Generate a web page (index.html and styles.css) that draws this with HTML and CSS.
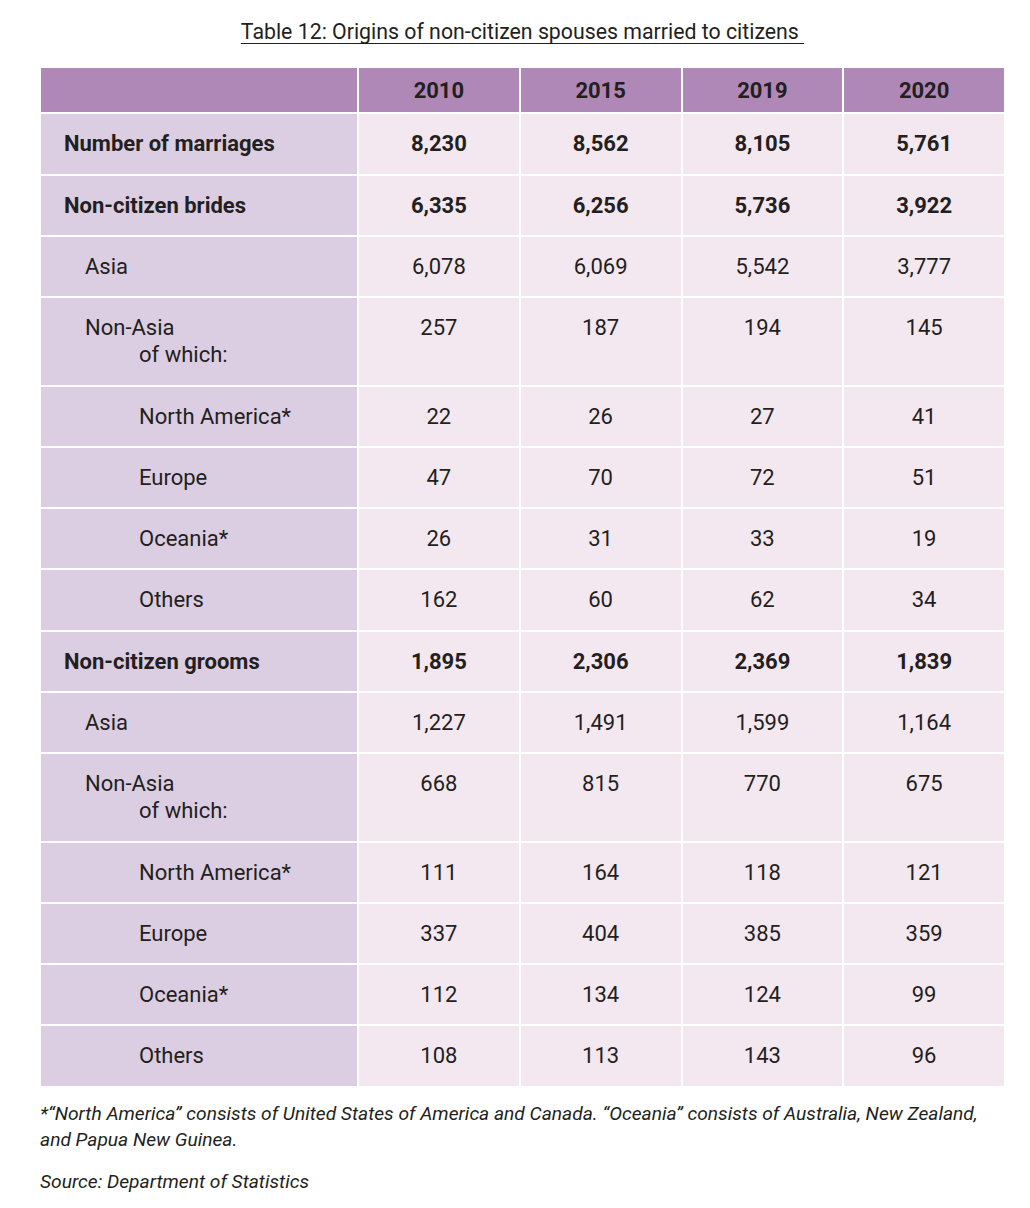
FILE: index.html
```html
<!DOCTYPE html>
<html lang="en">
<head>
<meta charset="utf-8">
<title>Table 12</title>
<link rel="stylesheet" href="styles.css">
</head>
<body>
<div class="page">
  <h1 class="title"><span>Table 12: Origins of non-citizen spouses married to citizens&nbsp;</span></h1>
  <table class="data">
    <thead>
      <tr><th class="lab"></th><th>2010</th><th>2015</th><th>2019</th><th>2020</th></tr>
    </thead>
    <tbody>
      <tr class="bold"><td class="lab">Number of marriages</td><td>8,230</td><td>8,562</td><td>8,105</td><td>5,761</td></tr>
      <tr class="bold"><td class="lab">Non-citizen brides</td><td>6,335</td><td>6,256</td><td>5,736</td><td>3,922</td></tr>
      <tr><td class="lab l1">Asia</td><td>6,078</td><td>6,069</td><td>5,542</td><td>3,777</td></tr>
      <tr><td class="lab l1">Non-Asia<br><span class="sub">of which:</span></td><td>257</td><td>187</td><td>194</td><td>145</td></tr>
      <tr><td class="lab l2">North America*</td><td>22</td><td>26</td><td>27</td><td>41</td></tr>
      <tr><td class="lab l2">Europe</td><td>47</td><td>70</td><td>72</td><td>51</td></tr>
      <tr><td class="lab l2">Oceania*</td><td>26</td><td>31</td><td>33</td><td>19</td></tr>
      <tr><td class="lab l2">Others</td><td>162</td><td>60</td><td>62</td><td>34</td></tr>
      <tr class="bold"><td class="lab">Non-citizen grooms</td><td>1,895</td><td>2,306</td><td>2,369</td><td>1,839</td></tr>
      <tr><td class="lab l1">Asia</td><td>1,227</td><td>1,491</td><td>1,599</td><td>1,164</td></tr>
      <tr><td class="lab l1">Non-Asia<br><span class="sub">of which:</span></td><td>668</td><td>815</td><td>770</td><td>675</td></tr>
      <tr><td class="lab l2">North America*</td><td>111</td><td>164</td><td>118</td><td>121</td></tr>
      <tr><td class="lab l2">Europe</td><td>337</td><td>404</td><td>385</td><td>359</td></tr>
      <tr><td class="lab l2">Oceania*</td><td>112</td><td>134</td><td>124</td><td>99</td></tr>
      <tr><td class="lab l2">Others</td><td>108</td><td>113</td><td>143</td><td>96</td></tr>
    </tbody>
  </table>
  <p class="note">*“North America” consists of United States of America and Canada. “Oceania” consists of Australia, New Zealand, and Papua New Guinea.</p>
  <p class="note source">Source: Department of Statistics</p>
</div>
</body>
</html>
```

FILE: styles.css
```css
html, body {
  margin: 0;
  padding: 0;
  background: #ffffff;
}

body {
  font-family: Roboto, "Liberation Sans", sans-serif;
  color: #231f20;
}

.page {
  width: 967px;
  padding: 17px 0 0 39px;
}

.title {
  margin: 0 0 19px;
  text-align: center;
  font-size: 21.3px;
  font-weight: 400;
  line-height: 30px;
}

.title span {
  text-decoration: underline;
  text-decoration-thickness: 1px;
  text-underline-offset: 4px;
}

.data {
  width: 967px;
  border-collapse: collapse;
  table-layout: fixed;
  font-size: 22px;
  line-height: 27.25px;
}

.data th,
.data td {
  border: 2px solid #ffffff;
  text-align: center;
  vertical-align: top;
  padding: 16px 8px;
  background: #f3e7f0;
}

.data th {
  background: #af88b7;
  font-weight: 700;
  padding: 8.5px 8px;
}

.data th.lab {
  width: 300px;
}

.data td.lab {
  text-align: left;
  background: #dbcde2;
  padding-left: 23px;
}

.data td.l1 {
  padding-left: 44px;
}

.data td.l2 {
  padding-left: 98px;
}

.sub {
  display: inline-block;
  padding-left: 54px;
}

.bold td {
  font-weight: 700;
}

.note {
  margin: 13px 0 0 1px;
  font-size: 19.2px;
  font-style: italic;
  line-height: 26px;
  width: 960px;
}

.note.source {
  margin-top: 16px;
}
```
